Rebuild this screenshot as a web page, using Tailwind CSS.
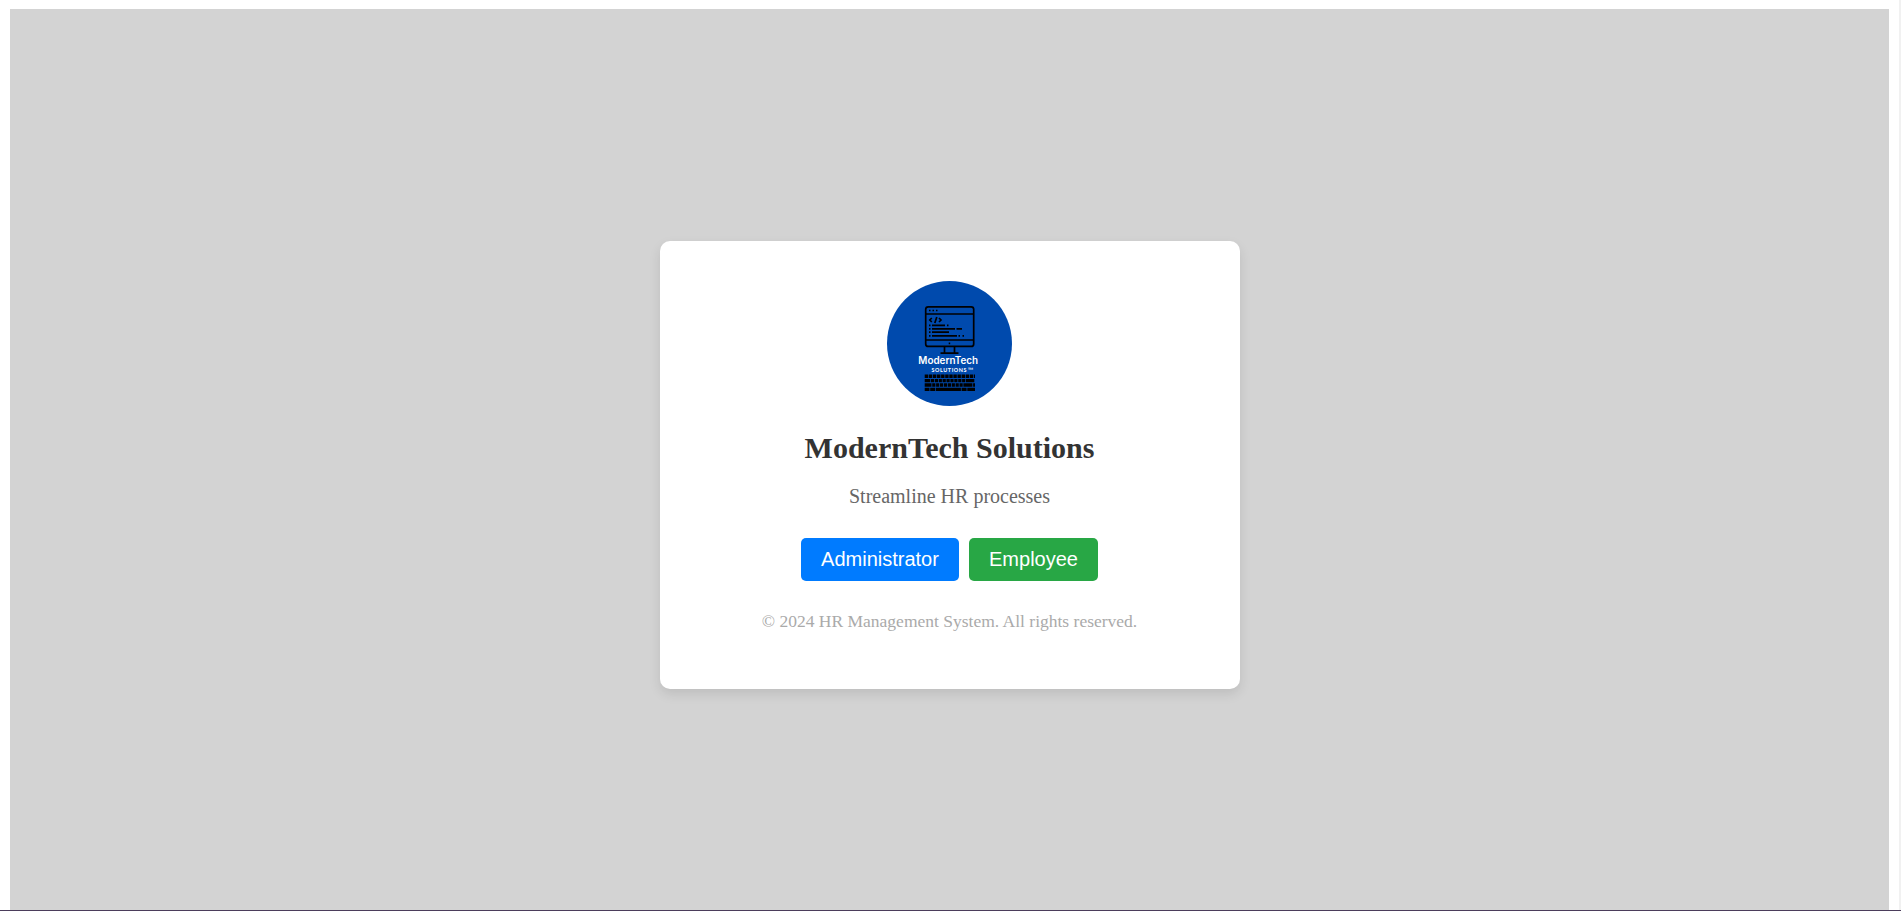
<!DOCTYPE html>
<html lang="en"><head><meta charset="utf-8"><title>ModernTech Solutions</title>
<script src="https://cdn.jsdelivr.net/npm/@tailwindcss/browser@4"></script></head>
<body class="h-screen overflow-hidden bg-white font-['Liberation_Serif',serif] flex flex-col">
<div class="flex h-[910px] shrink-0">
<main class="ml-[10px] mt-[9px] w-[1879px] bg-[#d3d3d3] flex flex-col items-center">
<section class="mt-[232px] h-[448px] w-[580px] rounded-[10px] bg-white shadow-[0_5px_12px_rgba(0,0,0,0.1)] flex flex-col items-center pt-10">
<svg class="size-[125px] shrink-0" viewBox="0 0 125 125">
<circle cx="62.5" cy="62.5" r="62.5" fill="#004aad"/>
<g fill="none" stroke="#000" stroke-width="1.7">
<rect x="38.7" y="25.8" width="48" height="39.6" rx="2.5"/>
<path d="M38 33h49M38 59h49M57.5 66v5.5M67.5 66v5.5M53.5 72.1h18"/>
<path d="M42 29.5h1.5M45.5 29.5h1.5M49 29.5h1.5"/>
<path d="M44.8 37l-2 2 2 2M49.8 36l-2 6M52 37l2 2-2 2" />
<path d="M42 44.3h1.5M45 44.3h13M60 44.3h1.5M42 47.8h1.5M45 47.8h23M69.5 47.8h5.5M42 51.2h1.5M45 51.2h17M42 54.8h1.5M45 54.8h25M71.5 54.8h1.5M75.5 54.8h1.5M61.7 62.3h1.5"/>
</g>
<g fill="#fff">
<text x="31.3" y="83" font-family="Inter, sans-serif" font-size="10" font-weight="600" textLength="59.8" lengthAdjust="spacingAndGlyphs">ModernTech</text>
<text x="44.5" y="91.3" font-family="Lato, sans-serif" font-size="5.4" font-weight="700" textLength="35">SOLUTIONS</text>
<text x="80.8" y="91.8" font-family="Lato, sans-serif" font-size="7.5">™</text></g>
<g stroke="#000" stroke-width="3.4" fill="none">
<path d="M37.7 95.2H88" stroke-dasharray="3.4 .7"/>
<path d="M37.7 99.6H88" stroke-dasharray="5.5 .7 3.2 .7 3.2 .7 3.2 .7 3.2 .7 3.2 .7 3.2 .7 3.2 .7 3.2 .7 3.2 .7 8 .7"/>
<path d="M37.7 104H88" stroke-dasharray="6.8 .7 3.2 .7 3.2 .7 3.2 .7 3.2 .7 3.2 .7 3.2 .7 3.2 .7 3.2 .7 9 .7"/>
<path d="M37.7 108.4H88" stroke-dasharray="4.8 .7 5 .7 25 .7 5 .7 9 .7"/>
</g></svg>
<h1 class="mt-[25px] text-[30px] leading-[34px] font-bold text-[#333]">ModernTech Solutions</h1>
<p class="mt-[19px] text-[20px] leading-[24px] text-[#666]">Streamline HR processes</p>
<div class="mt-[30px] flex gap-[10px] font-['Liberation_Sans',sans-serif] text-[20px] leading-[23px] text-white">
<button class="h-[43px] w-[158px] rounded-[5px] bg-[#007bff]">Administrator</button>
<button class="h-[43px] w-[129px] rounded-[5px] bg-[#28a745]">Employee</button></div>
<p class="mt-[30px] text-[17.5px] leading-[20px] text-[#aaa]">© 2024 HR Management System. All rights reserved.</p>
</section></main>
<div class="ml-auto w-[2px] bg-[#f1f1f1]"></div>
</div>
<div class="h-px shrink-0 bg-[#4b3d5b]"></div>
</body></html>
